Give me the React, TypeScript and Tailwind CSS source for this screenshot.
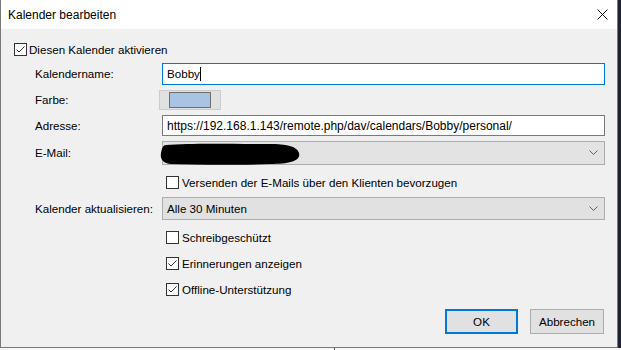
import React from 'react';

const font = "font-['Liberation_Sans',Arial,sans-serif]";

const Check = ({ checked }: { checked?: boolean }) => (
  <span className="w-[13px] h-[13px] border border-[#333333] bg-white flex items-center justify-center shrink-0">
    {checked && (
      <svg width="11" height="11" viewBox="0 0 11 11">
        <path d="M1.5 5.5 L4 8 L9.5 2.5" fill="none" stroke="#333333" strokeWidth="1" />
      </svg>
    )}
  </span>
);

const Chevron = () => (
  <svg width="9" height="6" viewBox="0 0 9 6">
    <path d="M0.5 0.5 L4.5 4.5 L8.5 0.5" fill="none" stroke="#606060" strokeWidth="1" />
  </svg>
);

const CheckRow = ({ label, checked, className }: { label: string; checked?: boolean; className: string }) => (
  <div className={`flex items-center h-[13px] pl-[152px] gap-[3px] ${className}`}>
    <Check checked={checked} />
    <span className="leading-none">{label}</span>
  </div>
);

export default function App() {
  return (
    <div className={`w-[621px] h-[350px] bg-[#f7f7f7] flex flex-col overflow-hidden text-[11.6px] text-black ${font}`}>
      <div className="flex h-[348px]">
        <div className="w-[618px] h-[348px] flex flex-col border-l border-r border-b border-[#7a7a7a]">
          {/* Title bar */}
          <div className="h-[29px] bg-white flex items-center justify-between pl-[7px] pr-[9px] shrink-0">
            <span className="text-[12px]">Kalender bearbeiten</span>
            <svg width="11" height="11" viewBox="0 0 11 11">
              <path d="M0.5 0.5 L10.5 10.5 M10.5 0.5 L0.5 10.5" stroke="#111111" strokeWidth="1" />
            </svg>
          </div>

          {/* Body */}
          <div className="flex-1 bg-[#f0f0f0] pt-[14px] pl-[13px] flex flex-col">
            <div className="flex items-center h-[13px] gap-[2px]">
              <Check checked />
              <span className="leading-none">Diesen Kalender aktivieren</span>
            </div>

            <div className="flex items-center mt-[7px] h-[22px]">
              <span className="w-[148px] pl-[21px]">Kalendername:</span>
              <div className="w-[443px] h-[22px] bg-white border border-[#0078d7] flex items-center pl-[4px]">
                Bobby<span className="w-px h-[14px] bg-black" />
              </div>
            </div>

            <div className="flex items-center mt-[5px] h-[20px]">
              <span className="w-[145px] pl-[21px]">Farbe:</span>
              <div className="w-[62px] h-[20px] bg-[#e1e1e1] border border-[#cccccc] flex items-center justify-center">
                <div className="w-[42px] h-[16px] bg-[#a9c3e3] border border-[#6e6e6e]" />
              </div>
            </div>

            <div className="flex items-center mt-[5px] h-[21px]">
              <span className="w-[148px] pl-[21px]">Adresse:</span>
              <div className="w-[443px] h-[21px] bg-white border border-[#7a7a7a] flex items-center pl-[4px] text-[12px]">
                https://192.168.1.143/remote.php/dav/calendars/Bobby/personal/
              </div>
            </div>

            <div className="flex items-center mt-[5px] h-[24px]">
              <span className="w-[148px] pl-[21px]">E-Mail:</span>
              <div className="relative w-[443px] h-[24px] bg-[#e3e3e3] border border-[#adadad] flex items-center justify-end pr-[6px]">
                <Chevron />
                <svg className="absolute left-[-3px] top-[0px]" width="142" height="24" viewBox="0 0 142 24">
                  <path d="M6 3 C30 1 70 2 110 2 C126 2 137 4 139 11 C141 19 130 22 110 22 C80 23 40 23 10 22 C2 21 0 16 1 11 C2 6 3 3 6 3 Z" fill="#000000" />
                </svg>
              </div>
            </div>

            <CheckRow className="mt-[11px]" label="Versenden der E-Mails über den Klienten bevorzugen" />

            <div className="flex items-center mt-[8px] h-[23px]">
              <span className="w-[148px] pl-[21px]">Kalender aktualisieren:</span>
              <div className="w-[443px] h-[23px] bg-[#e1e1e1] border border-[#adadad] flex items-center justify-between pl-[4px] pr-[6px]">
                <span>Alle 30 Minuten</span>
                <Chevron />
              </div>
            </div>

            <CheckRow className="mt-[11px]" label="Schreibgeschützt" />
            <CheckRow className="mt-[13px]" label="Erinnerungen anzeigen" checked />
            <CheckRow className="mt-[13px]" label="Offline-Unterstützung" checked />

            <div className="flex justify-end gap-[12px] mt-[13px] pr-[13px]">
              <button className="w-[73px] h-[25px] bg-[#e1e1e1] border-2 border-[#0078d7] flex items-center justify-center">OK</button>
              <button className="w-[74px] h-[25px] bg-[#e1e1e1] border border-[#adadad] flex items-center justify-center">Abbrechen</button>
            </div>
          </div>
        </div>
        <div className="flex-1 bg-[#1c2433]" />
      </div>
      <div className="flex-1 flex">
        <div className="w-[335px] border-r border-[#555555]" />
        <div className="flex-1" />
      </div>
    </div>
  );
}
